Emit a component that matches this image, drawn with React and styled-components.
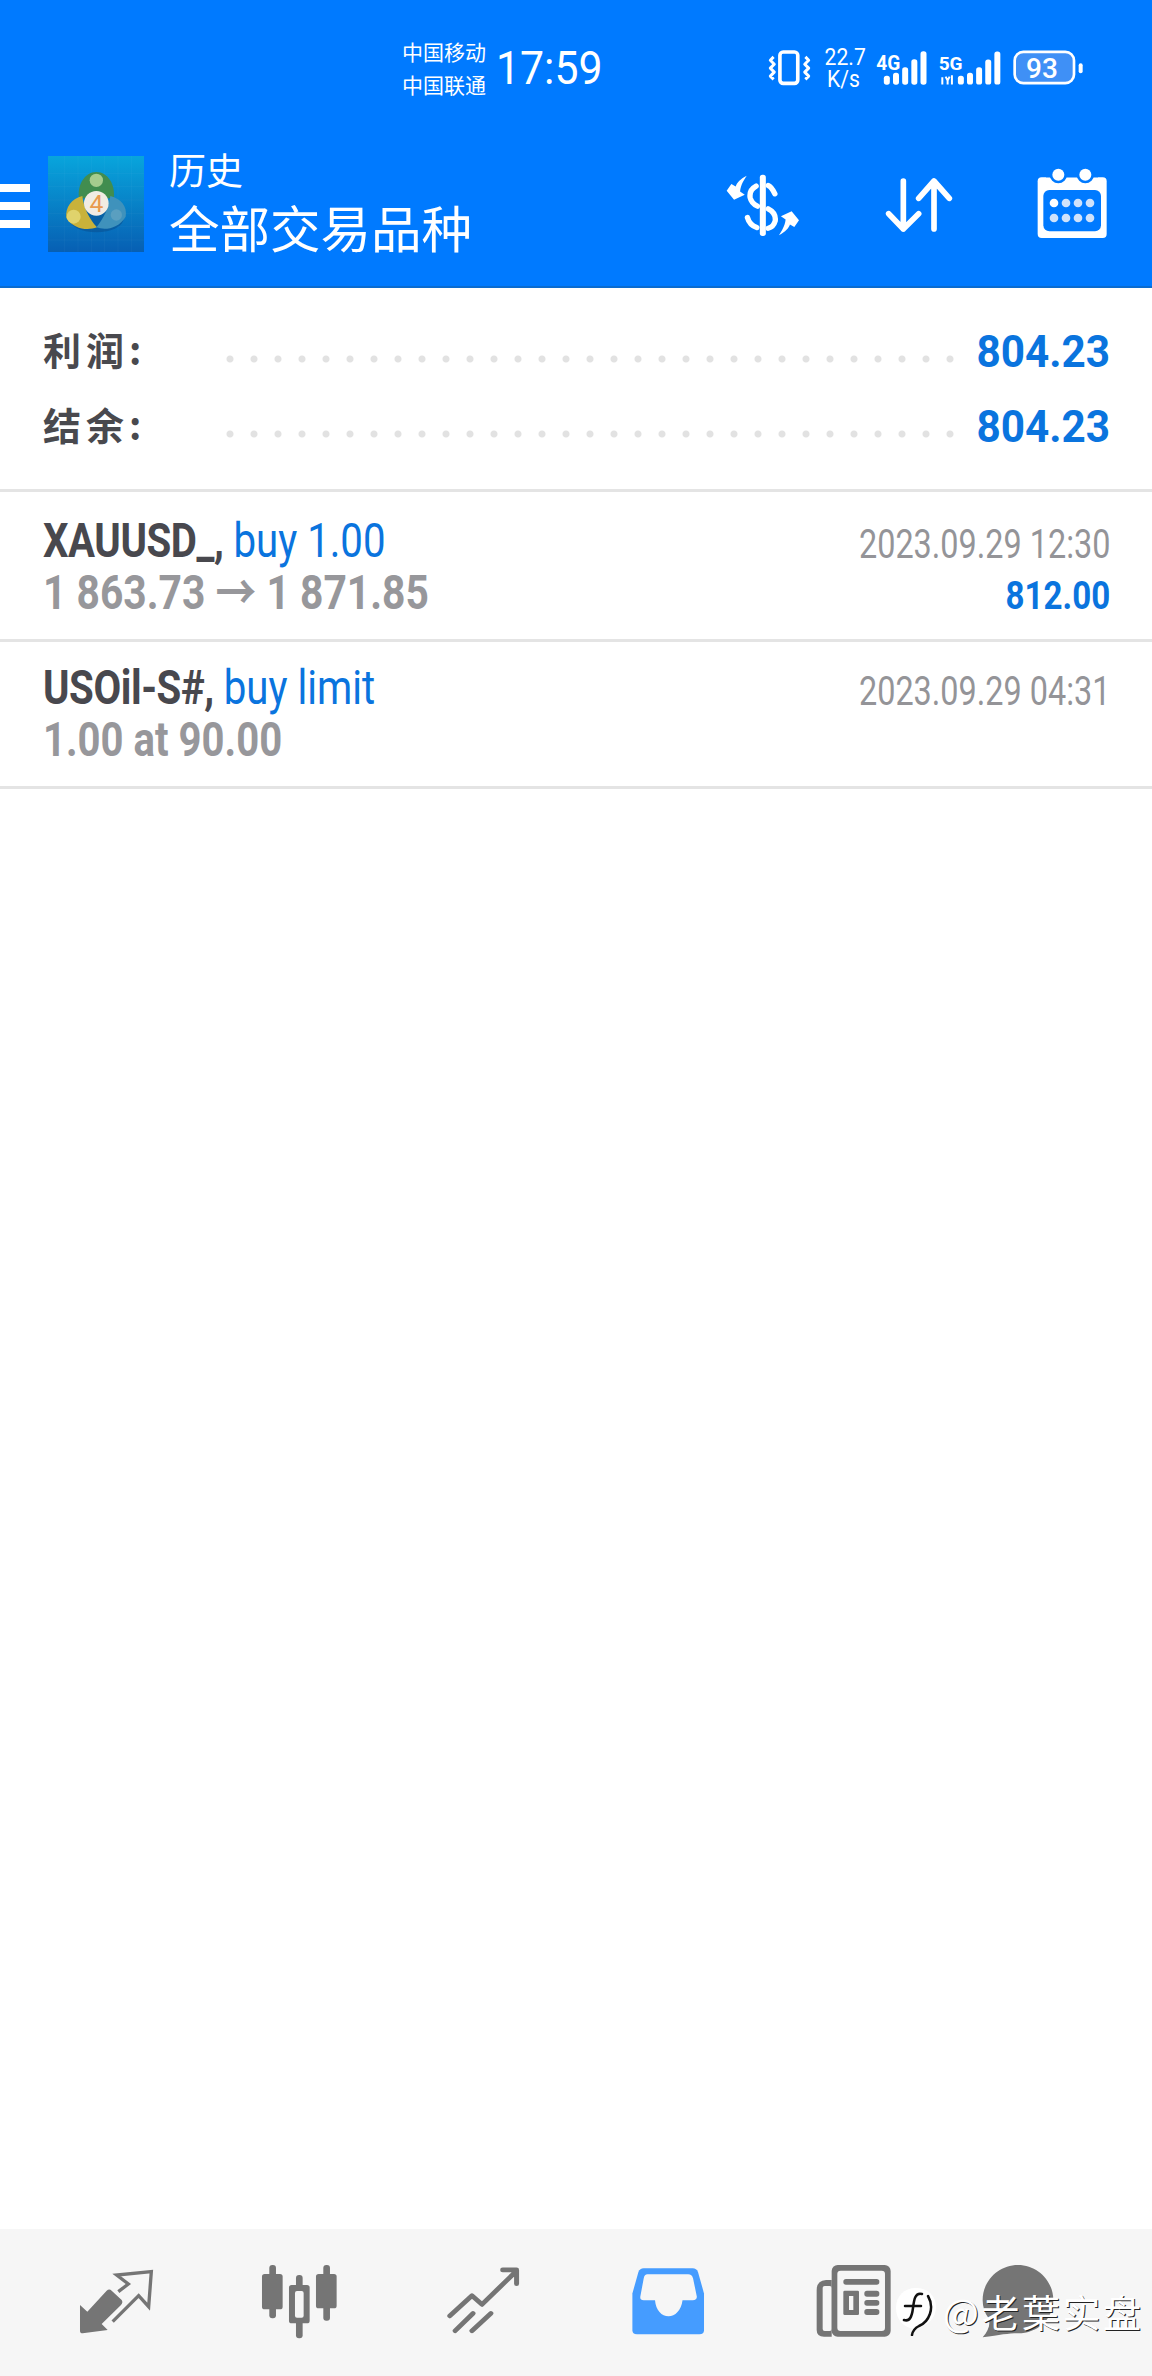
import React from 'react'
import styled, { createGlobalStyle } from 'styled-components'

const GlobalStyle = createGlobalStyle`
  html, body { margin: 0; padding: 0; background: #fff; }
  body { font-family: Roboto, "Noto Sans CJK SC", sans-serif; }
`

const Page = styled.div`
  position: relative;
  width: 1152px;
  height: 2376px;
  display: flex;
  flex-direction: column;
  overflow: hidden;
  background: #fff;
`
const Header = styled.header`
  background: #007aff;
  border-bottom: 2px solid #0a6cd0;
  color: #fff;
`
const StatusBar = styled.div`
  height: 130px;
  display: flex;
  align-items: center;
  padding: 5px 0 0 402px;
  box-sizing: border-box;
`
const Carrier = styled.div`
  font: 400 21px/33px "Noto Sans CJK SC", sans-serif;
  width: 94px;
`
const Clock = styled.div`
  font: 400 46px/1 Roboto, sans-serif;
  width: 272px;
  transform: scaleX(.93);
  transform-origin: left center;
`
const StatusIcons = styled.div`
  display: flex;
  align-items: center;
  gap: 11px;
`
const Speed = styled.div`
  width: 43px;
  font: 400 24px/22px Roboto, sans-serif;
  text-align: center;
  white-space: nowrap;
  transform: scaleX(.88);
`
const Toolbar = styled.div`
  height: 156px;
  display: flex;
  align-items: flex-start;
`
const Menu = styled.div`
  width: 30px;
  margin: 54px 18px 0 0;
  display: flex;
  flex-direction: column;
  gap: 10px;
`
const MenuBar = styled.span`
  height: 8px;
  background: #fff;
`
const Logo = styled.svg`
  width: 96px;
  height: 96px;
  margin-top: 26px;
  flex: none;
`
const Titles = styled.div`
  margin: 17px 0 0 25px;
  width: 555px;
`
const SubTitle = styled.div`
  font: 400 37px/44px "Noto Sans CJK SC", sans-serif;
`
const Title = styled.div`
  font: 400 50.5px/70px "Noto Sans CJK SC", sans-serif;
`
const ToolIcon = styled.svg`
  flex: none;
  margin-top: ${p => p.$top}px;
  margin-left: ${p => p.$left}px;
`
const Summary = styled.section`
  height: 204px;
  padding: 26px 42px 0 43px;
  box-sizing: border-box;
  border-bottom: 3px solid #e4e4e4;
`
const SummaryRow = styled.div`
  display: flex;
  align-items: center;
  height: 75px;
`
const SummaryLabel = styled.div`
  width: 175px;
  margin-top: -6px;
  font: 700 38px/1 "Noto Sans CJK SC", sans-serif;
  letter-spacing: 5px;
  color: #49494e;
`
const Dots = styled.div`
  width: 744px;
  height: 24px;
  margin-top: 14px;
  background: radial-gradient(circle, #e2e2e2 3px, transparent 4px) 0 0 / 24px 24px repeat-x;
`
const SummaryValue = styled.div`
  margin-left: auto;
  font: 700 45px/1 Roboto, sans-serif;
  color: #0a74de;
  white-space: nowrap;
  transform: scaleX(.94);
  transform-origin: right center;
`
const TradeRow = styled.div`
  height: ${p => p.$height}px;
  padding: ${p => p.$pad}px 42px 0 43px;
  box-sizing: border-box;
  border-bottom: 3px solid #e4e4e4;
  display: flex;
  justify-content: space-between;
`
const TradeSide = styled.div`
  display: flex;
  flex-direction: column;
  align-items: ${p => (p.$right ? 'flex-end' : 'flex-start')};
`
// Roboto Condensed is not installed, so the list text is squeezed
const Squeezed = styled.div`
  white-space: nowrap;
  transform: scaleX(${p => p.$x});
  transform-origin: ${p => (p.$right ? 'right' : 'left')} center;
  height: ${p => p.$h}px;
  margin-top: ${p => p.$mt || 0}px;
  font-size: ${p => p.$size}px;
  line-height: ${p => p.$h}px;
  font-weight: ${p => p.$weight || 400};
  color: ${p => p.$color};
`
const Symbol = styled.span`
  font-weight: 700;
  letter-spacing: -.5px;
  color: #48484e;
`
const Side = styled.span`
  color: #0a74de;
`
const Spacer = styled.div`
  flex: 1;
`
const BottomNav = styled.nav`
  height: 147px;
  background: #f6f6f6;
`
const NavIcons = styled.svg`
  display: block;
  width: 1152px;
  height: 147px;
`
const Watermark = styled.div`
  position: absolute;
  left: 895px;
  top: 2286px;
  display: flex;
  align-items: center;
  color: #fff;
  font: 400 38px/48px "Noto Sans CJK SC", sans-serif;
  letter-spacing: 2.5px;
  text-shadow: 1px 1px 0 #222;
  white-space: nowrap;
`
const WatermarkLogo = styled.svg`
  width: 42px;
  height: 50px;
  margin-right: 6px;
`

const Vibrate = () => (
  <svg width="43" height="37" viewBox="25 25 130 110" fill="none" stroke="#fff">
    <rect x="61" y="33" width="54" height="95" rx="10" strokeWidth="11" />
    <path d="M42 48l-10 10l12 12l-12 12l12 12l-12 12l10 10M138 48l10 10l-12 12l12 12l-12 12l12 12l-10 10" strokeWidth="9" strokeLinejoin="round" />
  </svg>
)

const BarTops = [105, 96, 80, 56, 32]

const Signal = ({ label, width, viewBox, textX, barX, data }) => (
  <svg width={width} height="36" viewBox={viewBox}>
    <text x={textX} y="88" fill="#fff" fontFamily="Roboto" fontWeight="700" fontSize="58" textLength="72" lengthAdjust="spacingAndGlyphs">{label}</text>
    {data && <path d="M543 110V132M553 108l6 12l6 -12M559 120V132M572 104V132" stroke="#fff" strokeWidth="6" fill="none" />}
    {BarTops.map((top, i) => (
      <rect key={top} x={barX + i * 27.5} y={top} width="18" height={132 - top} rx="8" fill="#fff" />
    ))}
  </svg>
)

const Battery = () => (
  <svg width="72" height="37" viewBox="758 26 216 110">
    <rect x="766" y="34" width="178" height="94" rx="26" fill="#3f90f6" stroke="#fff" strokeWidth="8" />
    <rect x="958" y="68" width="12" height="30" rx="6" fill="#fff" />
    <text x="848" y="112" fill="#fff" fontFamily="Roboto" fontWeight="500" fontSize="84" textAnchor="middle">93</text>
  </svg>
)

const GridLines = [60, 100, 140, 180, 220, 260]

const Mt4Logo = () => (
  <Logo viewBox="25 18 288 288">
    <defs>
      <linearGradient id="mt-bg" x1="0" y1="0" x2="0" y2="1">
        <stop offset="0" stopColor="#08a5dc" />
        <stop offset="1" stopColor="#075fb3" />
      </linearGradient>
    </defs>
    <rect x="25" y="18" width="288" height="288" fill="url(#mt-bg)" />
    {GridLines.map(v => (
      <path key={v} d={`M${v + 15} 18V306M25 ${v + 10}H313`} stroke="#fff" strokeOpacity=".06" strokeWidth="2" />
    ))}
    <ellipse cx="170" cy="205" rx="82" ry="42" fill="#0a4f8e" fillOpacity=".55" />
    <path d="M118 145C112 105 135 66 170 66C205 66 228 105 222 145Z" fill="#418d4f" />
    <circle cx="170" cy="91" r="20" fill="#a5cc8e" />
    <path d="M128 138C96 146 76 172 80 204C104 240 146 242 172 232C148 206 132 172 128 138Z" fill="#c9b23a" />
    <circle cx="102" cy="200" r="21" fill="#e0d36c" />
    <path d="M212 138C244 146 264 170 258 200C236 236 196 242 170 232C192 206 208 172 212 138Z" fill="#3f92bc" />
    <circle cx="230" cy="195" r="17" fill="#5a9fc0" />
    <circle cx="170" cy="160" r="37" fill="#f1ece3" />
    <text x="170" y="186" textAnchor="middle" fill="#e89a4e" fontFamily="Roboto" fontSize="74">4</text>
  </Logo>
)

const DollarIcon = () => (
  <ToolIcon $top={43} $left={0} width="77" height="66" viewBox="130 95 230 197" fill="#fff">
    <rect x="237" y="100" width="18" height="183" rx="8" />
    <path d="M282 157Q272 136 262 132M226 134Q205 145 208 168Q212 186 230 194M262 202Q286 214 283 238Q278 256 262 260M200 228Q206 250 228 258" fill="none" stroke="#fff" strokeWidth="16" strokeLinecap="round" />
    <path d="M198 103C178 113 168 125 165 135L152 128L138 148L160 175L192 160L178 150C180 130 190 115 198 103Z" />
    <path d="M198 103C178 113 168 125 165 135L152 128L138 148L160 175L192 160L178 150C180 130 190 115 198 103Z" transform="rotate(180 246 192)" />
  </ToolIcon>
)

const SortIcon = () => (
  <ToolIcon $top={46} $left={83} width="70" height="60" viewBox="610 103 210 180" fill="none" stroke="#fff" strokeWidth="17" strokeLinecap="round" strokeLinejoin="round">
    <path d="M668 118V262M624 216L668 262L714 216M760 118V262M714 170L760 118L806 170" />
  </ToolIcon>
)

const CalendarIcon = () => (
  <ToolIcon $top={38} $left={82} width="72" height="70" viewBox="1070 82 216 210">
    <rect x="1075" y="110" width="207" height="182" rx="12" fill="#fff" />
    <circle cx="1137" cy="102" r="26" fill="#007aff" />
    <circle cx="1218" cy="102" r="26" fill="#007aff" />
    <rect x="1100" y="82" width="156" height="28" fill="#007aff" />
    <circle cx="1137" cy="102" r="18" fill="#fff" />
    <circle cx="1218" cy="102" r="18" fill="#fff" />
    <rect x="1092" y="148" width="173" height="124" rx="18" fill="#007aff" />
    {[187, 232].map(y => [1124, 1160, 1196, 1232].map(x => (
      <circle key={x + y} cx={x} cy={y} r="13" fill={x === 1124 && y === 187 ? '#fff' : '#cfe2fb'} />
    )))}
  </ToolIcon>
)

const TradeRows = [
  {
    height: 150, pad: 23, detailX: 0.85, symbol: 'XAUUSD_,', side: 'buy 1.00', detail: '1 863.73 → 1 871.85',
    time: '2023.09.29 12:30', profit: '812.00',
  },
  {
    height: 147, pad: 20, detailX: 0.835, symbol: 'USOil-S#,', side: 'buy limit', detail: '1.00 at 90.00',
    time: '2023.09.29 04:31',
  },
]

const SummaryRows = [
  { label: '利润:', value: '804.23' },
  { label: '结余:', value: '804.23' },
]

export default function App() {
  return (
    <Page>
      <GlobalStyle />
      <Header>
        <StatusBar>
          <Carrier>中国移动<br />中国联通</Carrier>
          <Clock>17:59</Clock>
          <StatusIcons>
            <Vibrate />
            <Speed>22.7<br />K/s</Speed>
            <Signal label="4G" width={51} viewBox="345 28 152 108" textX={345} barX={368} />
            <Signal label="5G" width={63} viewBox="530 28 190 108" textX={532} barX={590} data />
            <Battery />
          </StatusIcons>
        </StatusBar>
        <Toolbar>
          <Menu><MenuBar /><MenuBar /><MenuBar /></Menu>
          <Mt4Logo />
          <Titles>
            <SubTitle>历史</SubTitle>
            <Title>全部交易品种</Title>
          </Titles>
          <DollarIcon />
          <SortIcon />
          <CalendarIcon />
        </Toolbar>
      </Header>

      <Summary>
        {SummaryRows.map(row => (
          <SummaryRow key={row.label}>
            <SummaryLabel>{row.label}</SummaryLabel>
            <Dots />
            <SummaryValue>{row.value}</SummaryValue>
          </SummaryRow>
        ))}
      </Summary>

      {TradeRows.map(row => (
        <TradeRow key={row.symbol} $height={row.height} $pad={row.pad}>
          <TradeSide>
            <Squeezed $x={0.82} $size={49} $h={52}>
              <Symbol>{row.symbol}</Symbol> <Side>{row.side}</Side>
            </Squeezed>
            <Squeezed $x={row.detailX} $size={48} $h={48} $mt={2} $weight={700} $color="#97979b">{row.detail}</Squeezed>
          </TradeSide>
          <TradeSide $right>
            <Squeezed $right $x={0.81} $size={40} $h={44} $mt={8} $color="#949498">{row.time}</Squeezed>
            {row.profit && (
              <Squeezed $right $x={0.85} $size={39} $h={44} $mt={7} $weight={700} $color="#0a74de">{row.profit}</Squeezed>
            )}
          </TradeSide>
        </TradeRow>
      ))}

      <Spacer />

      <BottomNav>
        <NavIcons viewBox="0 0 1152 147" fill="#757575">
          <g transform="translate(60 21) scale(.3333)">
            <path d="M60 165L82 185L140 122Q148 115 155 122L185 150Q190 157 183 165L125 222L143 240L68 250Q60 250 60 242Z" />
            <path d="M158 215L236 137L266 170L274 65L170 75L205 102L175 125" fill="none" stroke="#757575" strokeWidth="10" />
            <rect x="628" y="45" width="20" height="160" rx="9" />
            <rect x="606" y="72" width="62" height="106" rx="8" />
            <rect x="790" y="45" width="20" height="167" rx="9" />
            <rect x="768" y="72" width="62" height="103" rx="8" />
            <rect x="708" y="75" width="20" height="190" rx="9" />
            <rect x="687" y="105" width="62" height="115" rx="8" />
            <rect x="705" y="123" width="26" height="80" rx="6" fill="#f6f6f6" />
          </g>
          <path transform="translate(0 -18.3) scale(.357 .329)" d="M1260 320L1322 258L1350 285L1445 185M1408 180H1447V222M1275 365L1325 312M1322 365L1375 312" fill="none" stroke="#757575" strokeWidth="14" strokeLinecap="round" strokeLinejoin="round" />
          <g transform="translate(560 -19.3) scale(.377 .335)">
            <path d="M222 175H352Q362 175 366 186L382 250V360Q382 372 370 372H204Q192 372 192 360V250L208 186Q212 175 222 175Z" fill="#459cff" />
            <path d="M232 193H340Q350 193 353 205L363 260Q363 270 352 270H325C322 300 305 318 288 318C270 318 254 300 252 270H222Q212 270 213 260L222 205Q224 193 232 193Z" fill="#f6f6f6" />
          </g>
          <g transform="translate(800 21) scale(.3333)">
            <path d="M95 90H78Q50 92 50 120V240Q50 260 72 260H95Z" />
            <rect x="68" y="108" width="27" height="135" rx="6" fill="#f6f6f6" />
            <rect x="95" y="45" width="177" height="215" rx="18" />
            <rect x="112" y="62" width="143" height="181" rx="10" fill="#f6f6f6" />
            <rect x="130" y="87" width="108" height="17" rx="8" />
            <rect x="130" y="122" width="47" height="73" rx="4" />
            <rect x="147" y="138" width="13" height="42" fill="#f6f6f6" />
            <rect x="193" y="122" width="45" height="18" rx="8" />
            <rect x="193" y="150" width="45" height="17" rx="8" />
            <rect x="193" y="177" width="45" height="18" rx="8" />
            <path d="M654 45C712 45 760 92 760 150C760 208 712 250 654 250C625 250 600 255 548 262C565 242 572 225 566 205C554 190 548 170 548 150C548 92 596 45 654 45Z" />
          </g>
        </NavIcons>
      </BottomNav>

      <Watermark>
        <WatermarkLogo viewBox="0 0 42 50">
          <path d="M21 2C33 2 41 10 41 21C41 32 33 40 20 43C8 42 1 33 1 22C1 10 9 2 21 2Z" fill="#fff" />
          <path d="M27 8C20 6 19 14 18 22C17 30 15 36 9 34M10 20H26M33 10C40 22 34 36 24 40Q18 43 17 49" fill="none" stroke="#111" strokeWidth="2.5" strokeLinecap="round" />
        </WatermarkLogo>
        @老葉实盘
      </Watermark>
    </Page>
  )
}
